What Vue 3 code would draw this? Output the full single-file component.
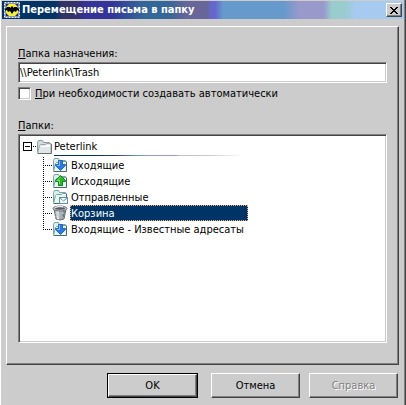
<script setup>
import { ref } from 'vue'

const folder = ref('\\\\Peterlink\\Trash')
const autoCreate = ref(false)
const selected = ref('trash')
const folders = [
  { id: 'inbox', name: 'Входящие', icon: 'down' },
  { id: 'outbox', name: 'Исходящие', icon: 'up' },
  { id: 'sent', name: 'Отправленные', icon: 'mail' },
  { id: 'trash', name: 'Корзина', icon: 'bin' },
  { id: 'known', name: 'Входящие - Известные адресаты', icon: 'down' },
]
</script>

<template>
  <main class="dialog">
    <header class="titlebar">
      <svg class="app-icon" viewBox="0 0 16 16" aria-hidden="true">
        <rect width="16" height="16" fill="#1a2f7a" />
        <rect x=".5" y=".5" width="15" height="15" fill="none" stroke="#fff" stroke-dasharray="2 1" />
        <rect x="1.500" y="1.500" width="13" height="13" fill="none" stroke="#fff" stroke-dasharray="1 1" />
        <path d="M5 2h6l3 3v6l-3 3H5l-3-3V5z" fill="#f4f03c" />
        <path d="M1 7l2-2h3l1 1V4l1 1 1-1v2l1-1h3l2 2v2l-2-1-1 2-2-1-2 3-2-3-2 1-1-2-2 1z" fill="#000" />
      </svg>
      <h1>Перемещение письма в папку</h1>
      <button class="close" type="button" aria-label="Закрыть">
        <svg viewBox="0 0 8 7" shape-rendering="crispEdges" aria-hidden="true">
          <path d="M0 0h2v1h1v1h2v-1h1v-1h2v1h-1v1h-1v1h-1v1h1v1h1v1h1v1h-2v-1h-1v-1h-2v1h-1v1h-2v-1h1v-1h1v-1h1v-1h-1v-1h-1v-1h-1z" fill="#000" />
        </svg>
      </button>
    </header>

    <section class="panel">
      <label class="caption" for="target"><u>П</u>апка назначения:</label>
      <input id="target" v-model="folder" class="target" type="text" spellcheck="false" />
      <label class="check">
        <input v-model="autoCreate" type="checkbox" />
        <span><u>П</u>ри необходимости создавать автоматически</span>
      </label>
      <div id="folders-label" class="caption folders-caption"><u>П</u>апки:</div>

      <div class="tree" role="tree" aria-labelledby="folders-label">
        <div class="root" role="treeitem" aria-expanded="true">
          <svg class="toggle" viewBox="0 0 13 9" shape-rendering="crispEdges" aria-hidden="true">
            <path d="M0 0h9v9h-9zM1 1v7h7v-7z" fill="#000" fill-rule="evenodd" />
            <path d="M2 4h5v1h-5zM10 4h1v1h-1zM12 4h1v1h-1z" fill="#000" />
          </svg>
          <svg class="icon" viewBox="0 0 16 16" aria-hidden="true">
            <path d="M1.500 13.500V3.500l1-2h4l1 2h6v3" fill="#d3dcdc" stroke="#8c9c9c" />
            <path d="M1.500 14.500l2-8 1-1h5l1-1h4.500v10z" fill="#e2e6e6" stroke="#9aa6a6" />
            <path d="M15.500 5v9.500H2" fill="none" stroke="#667272" />
            <path d="M5 7h5l1-1h3v2H5z" fill="#fff" />
          </svg>
          <span class="name">Peterlink</span>
        </div>
        <div class="rule"></div>
        <ul role="group">
          <li v-for="f in folders" :key="f.id" role="treeitem" :aria-selected="selected === f.id" @click="selected = f.id">
            <svg v-if="f.icon !== 'bin'" class="icon" viewBox="0 0 16 16" aria-hidden="true">
              <path d="M1.500 13.500v-10l1-2h4l1 2h6v3" fill="#dcf0ef" stroke="#75a6a5" />
              <path d="M1.500 14.500l2-8 1-1h5l1-1h4v10z" fill="#eaf6f5" stroke="#78a3a2" />
              <path d="M14.500 5v9.500H2" fill="none" stroke="#476b6c" />
              <template v-if="f.icon === 'down'">
                <path d="M6.500 3.500h4v4h3v1L8.500 13.500 3.500 8.500v-1h3z" fill="#287cdf" stroke="#2a62b8" />
                <path d="M7.500 4v4.500H5" fill="none" stroke="#7cc1ff" />
              </template>
              <template v-else-if="f.icon === 'up'">
                <path d="M8.500 2.500l5 5v1h-3v4h-4v-4h-3v-1z" fill="#28b828" stroke="#12801d" />
                <path d="M8.500 4L5 7.500h2.500V11" fill="none" stroke="#74e869" />
              </template>
              <template v-else>
                <rect x="7.500" y="8.500" width="8" height="6" fill="#f4ffff" stroke="#659399" />
                <path d="M8 9l3.500 3L15 9" fill="none" stroke="#659399" />
              </template>
            </svg>
            <svg v-else class="icon" viewBox="0 0 16 16" aria-hidden="true">
              <path d="M2 4h12l-2 10q-4 2-8 0z" fill="#a2a8b0" stroke="#686e76" />
              <path d="M4 6l1 8 2 .5V6z" fill="#e2e6ea" />
              <path d="M11 6h2l-1.500 7-1 .5z" fill="#6b717a" />
              <path d="M3 8l9 5M3 12l9-5M8 6l4 3M4 6l4 8" stroke="#c4c9cf" stroke-width=".7" />
              <ellipse cx="8" cy="3.500" rx="7" ry="2.500" fill="#c3c9ce" stroke="#70777e" />
              <ellipse cx="8" cy="3.500" rx="5" ry="1.200" fill="#555c65" />
              <path d="M3 2.500q4-2 8-.7" fill="none" stroke="#f4f6f8" />
            </svg>
            <span class="name">{{ f.name }}</span>
          </li>
        </ul>
      </div>
    </section>

    <footer class="actions">
      <div class="default"><button type="button">OK</button></div>
      <button type="button">Отмена</button>
      <button type="button" disabled>Справка</button>
    </footer>
  </main>
</template>

<style>
body {
  background: #cccccc;
}
</style>

<style scoped>
* {
  box-sizing: border-box;
}
.dialog {
  display: flex;
  flex-direction: column;
  min-height: 100vh;
  padding: 1px 2px 7px 1px;
  background: #cccccc;
  border-left: 1px solid #fff;
  box-shadow: inset -1px 0 #444, inset -2px 0 #808080;
  color: #000;
  font: 11px/13px Tahoma, "DejaVu Sans Condensed", "DejaVu Sans", sans-serif;
}
button,
input {
  font: inherit;
  color: inherit;
  margin: 0;
}
.titlebar {
  display: flex;
  align-items: center;
  gap: 2px;
  height: 18px;
  padding: 0 2px;
  background: linear-gradient(90deg, #003366 0 13%, #333366 15% 18%, #333399 21% 27%, #336699 35% 41%, #666699 46% 51%, #6666cc 52% 53%, #6699cc 55% 70%, #9999cc 74% 80%, #99cccc 82% 85%, #a6caf0 88%);
}
.app-icon {
  flex: none;
  width: 16px;
  height: 16px;
}
h1 {
  flex: 1;
  margin: 0;
  color: #fff;
  font-size: 11px;
  line-height: 16px;
  font-weight: bold;
  white-space: nowrap;
}
.close {
  display: grid;
  place-items: center;
  width: 16px;
  height: 14px;
  padding: 0;
  background: #cccccc;
  border: 1px solid;
  border-color: #fff #444 #444 #fff;
  box-shadow: inset -1px -1px #808080;
}
.close svg {
  width: 8px;
  height: 7px;
}
.panel {
  flex: 1;
  display: flex;
  flex-direction: column;
  margin: 7px 5px 0 4px;
  padding: 20px 11px 21px;
  border: 1px solid;
  border-color: #fff #444 #444 #fff;
  box-shadow: inset -1px -1px #808080;
}
.caption {
  line-height: 13px;
}
.target {
  width: 100%;
  height: 21px;
  margin-top: 2px;
  padding: 0 1px;
  background: #fff;
  border: 1px solid;
  border-color: #808080 #fff #fff #808080;
  box-shadow: inset 1px 1px #444, inset -1px -1px #cccccc;
  outline: none;
}
.check {
  display: flex;
  align-items: center;
  gap: 4px;
  margin-top: 4px;
}
.check input {
  appearance: none;
  width: 13px;
  height: 13px;
  background: #fff;
  border: 1px solid;
  border-color: #808080 #fff #fff #808080;
  box-shadow: inset 1px 1px #444, inset -1px -1px #cccccc;
}
.check input:checked {
  background: #003366;
}
.folders-caption {
  margin-top: 19px;
}
.tree {
  flex: 1;
  margin-top: 2px;
  padding: 3px;
  background: #fff;
  border: 1px solid;
  border-color: #808080 #fff #fff #808080;
  box-shadow: inset 1px 1px #444, inset -1px -1px #cccccc;
}
.root {
  display: flex;
  align-items: center;
  height: 17px;
  padding-left: 1px;
}
.toggle {
  width: 13px;
  height: 9px;
}
.icon {
  flex: none;
  width: 16px;
  height: 16px;
}
.name {
  padding: 0 2px;
  line-height: 17px;
  white-space: nowrap;
}
.rule {
  width: 190px;
  height: 1px;
  margin-left: 32px;
  background: linear-gradient(90deg, #003366 20%, #333399, #6699cc 44%, #9999cc 50%, #9999cc 64%, #c0c0c0 66%, #cccccc 82%, #fff);
}
ul {
  margin: 1px 0 0 21px;
  padding: 0;
  list-style: none;
}
li {
  display: flex;
  height: 16px;
  padding-left: 9px;
  background:
    repeating-linear-gradient(180deg, #000 0 1px, transparent 1px 2px) 0 0 / 1px 100% no-repeat,
    repeating-linear-gradient(90deg, #000 0 1px, transparent 1px 2px) 0 8px / 9px 1px no-repeat;
}
li:last-child {
  background:
    repeating-linear-gradient(180deg, #000 0 1px, transparent 1px 2px) 0 0 / 1px 9px no-repeat,
    repeating-linear-gradient(90deg, #000 0 1px, transparent 1px 2px) 0 8px / 9px 1px no-repeat;
}
li .name {
  height: 16px;
  margin-left: 2px;
  padding: 0 1px;
}
li[aria-selected="true"] .name {
  width: 178px;
  color: #fff;
  background: #003366;
  outline: 1px dotted #ffb070;
  outline-offset: -1px;
}
.actions {
  display: flex;
  justify-content: flex-end;
  align-items: center;
  gap: 9px;
  margin-top: 8px;
  padding-right: 6px;
}
.actions button {
  width: 89px;
  height: 25px;
  padding: 0;
  background: #cccccc;
  border: 1px solid;
  border-color: #fff #444 #444 #fff;
  box-shadow: inset -1px -1px #808080;
}
.default {
  display: flex;
  margin-right: 4px;
  border: 1px solid #000;
}
.default button {
  height: 23px;
}
.actions button:disabled {
  color: #808080;
  text-shadow: 1px 1px #fff;
}
</style>
